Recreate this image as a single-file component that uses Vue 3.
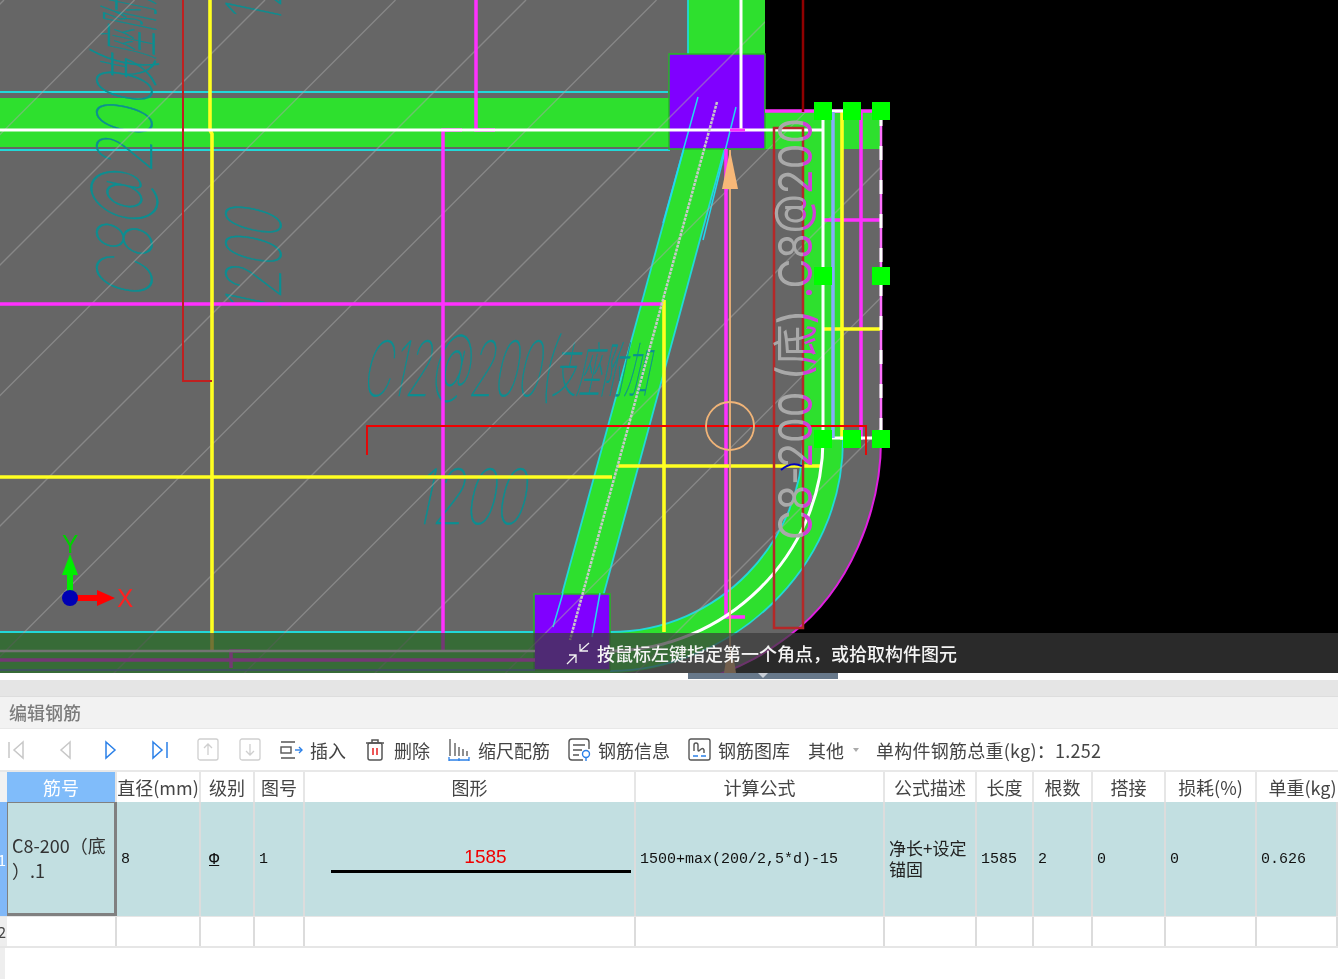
<script setup>
const diagonals = Array.from({ length: 12 }, (_, i) => 4 + i * 130.5);
const handles = [
  [814, 102], [843, 102], [872, 102],
  [814, 267], [872, 267],
  [814, 430], [843, 430], [872, 430],
];

const columns = [
  { label: "筋号", value: "", active: true },
  { label: "直径(mm)", value: "8" },
  { label: "级别", value: "Φ", grade: true },
  { label: "图号", value: "1" },
  { label: "图形", shape: true },
  { label: "计算公式", value: "1500+max(200/2,5*d)-15" },
  { label: "公式描述", desc: true },
  { label: "长度", value: "1585" },
  { label: "根数", value: "2" },
  { label: "搭接", value: "0" },
  { label: "损耗(%)", value: "0" },
  { label: "单重(kg)", value: "0.626", last: true },
];
</script>

<template>
  <div class="app">
    <div class="canvas">
      <svg class="cad" width="1338" height="673" viewBox="0 0 1338 673">
        <defs>
          <clipPath id="floor">
            <path d="M0 0H765V112H881V440C881 510 850 590 790 635C770 650 745 668 700 680H0Z" />
          </clipPath>
          <linearGradient id="dim" gradientUnits="userSpaceOnUse" x1="0" y1="-30" x2="0" y2="10">
            <stop offset="0.52" stop-color="#a9a9a9" />
            <stop offset="0.52" stop-color="#d040d8" />
          </linearGradient>
        </defs>

        <rect width="1338" height="673" fill="#000" />
        <path d="M0 0H765V112H881V440C881 510 850 590 790 635C770 650 745 668 700 680H0Z" fill="#666" />
        <path d="M881 440C881 510 850 590 790 635C770 650 745 668 700 680" fill="none" stroke="#e020e0" stroke-width="2" />

        <!-- beams -->
        <g fill="#2ee02e">
          <rect x="0" y="98" width="670" height="49" />
          <rect x="688" y="0" width="77" height="55" />
          <rect x="765" y="112" width="116" height="37" />
          <rect x="803" y="112" width="40" height="328" />
          <path d="M803 440C803 540 720 632 610 632H0V673H610C730 671 843 570 843 440Z" />
          <path d="M698 97L736 107L592 637L553 627Z" />
        </g>
        <g fill="none" stroke="#22d8d8" stroke-width="1.8">
          <path d="M0 92H668M0 150H670M688 0V54" />
          <path d="M803 440C803 540 720 632 610 632H0" />
          <path d="M843 440C843 570 730 671 610 671" />
          <path d="M698 97L553 627M736 107L592 637" />
          <path d="M803 150V440" />
        </g>

        <!-- slanted labels -->
        <g class="label">
          <text transform="translate(152 300) rotate(-90) skewX(-12) scale(.72 1)" font-size="76">C8@200(</text>
          <text transform="translate(152 86) rotate(-90) skewX(-12) scale(.44 1)" font-size="62">支座附加</text>
          <text transform="translate(281 318) rotate(-90) skewX(-12) scale(.65 1)" font-size="76">1200</text>
          <text transform="translate(281 27) rotate(-90) skewX(-12) scale(.65 1)" font-size="76">1200</text>
          <text transform="translate(361 396) skewX(-12) scale(.52 1)" font-size="76">C12@200(</text>
          <text transform="translate(552 392) skewX(-12) scale(.4 1)" font-size="60">支座附加</text>
          <text transform="translate(412 524) skewX(-12) scale(.68 1)" font-size="76">1200</text>
        </g>

        <!-- columns -->
        <g fill="#8000ff" stroke="#25b825" stroke-width="1.5">
          <rect x="669" y="54" width="96" height="95" />
          <rect x="534" y="594" width="76" height="76" />
        </g>
        <g fill="none" stroke="#22d8f0" stroke-width="1.5">
          <path d="M698 97L663 223M736 107L703 240M563 593L553 627M600 593L592 637" />
        </g>

        <!-- grid lines -->
        <g clip-path="url(#floor)" stroke="#a8a8a8" stroke-opacity=".5" stroke-width="1.4">
          <line v-for="c in diagonals" :key="c" :x1="c" y1="0" :x2="c - 700" y2="700" />
        </g>

        <g fill="none" stroke="#ff30ff" stroke-width="3.5">
          <path d="M0 304H664M443 652V130H462M476 0V130H495" />
          <path d="M726 149V617H745" />
          <path d="M765 111H881M861 112V440M823 220H881" />
          <path d="M0 660H535M231 668V651H250" />
          <path d="M881 112V440" stroke="#ff70ff" stroke-width="2.5" />
        </g>
        <g fill="none" stroke="#ffff20" stroke-width="3.6">
          <path d="M210 0V130L212 134V650" />
          <path d="M0 477H612M618 466H820M664 300V632" />
          <path d="M842 112V440M823 329H880" />
        </g>
        <g fill="none" stroke="#fff" stroke-width="3">
          <path d="M0 130H822M741 0V130" />
          <path d="M823 112V440C823 555 725 651 610 651" />
          <path d="M823 111H845" />
          <path d="M0 651H535" stroke-width="2.5" />
          <path d="M881 112V440" stroke-dasharray="14 20" />
          <path d="M832 438H881" stroke-dasharray="22 6" />
        </g>
        <path d="M730 130H745" stroke="#ff30ff" stroke-width="3" />
        <path d="M833 112V438" stroke="#86acf8" stroke-width="3.5" fill="none" />
        <path d="M717 102L570 640" stroke="#c8c8c8" stroke-width="2.5" stroke-dasharray="3 1" fill="none" />
        <path d="M0 670H535" stroke="#5070e0" stroke-width="1.5" />

        <!-- dimension lines -->
        <g fill="none" stroke="#b42828" stroke-width="2.5">
          <path d="M183 0V381H212" stroke="#c02020" stroke-width="2" />
          <path d="M803 0V112" stroke="#900000" stroke-width="2.5" />
          <path d="M774 128H803V628H774Z" />
        </g>
        <path d="M367 455V426H866V455" fill="none" stroke="#f00000" stroke-width="1.8" />

        <!-- rotated rebar label -->
        <text
          class="dim-text"
          transform="translate(812 540) rotate(-90)"
          font-size="46"
          textLength="422"
          lengthAdjust="spacingAndGlyphs"
          fill="url(#dim)"
        >C8-200 (底) .C8@200</text>
        <path d="M781 470Q791 461 802 466" fill="none" stroke="#0000c0" stroke-width="2" />

        <!-- direction arrow and circle -->
        <g fill="none" stroke="#f0b478" stroke-width="1.8">
          <path d="M730 150V673" />
          <circle cx="730" cy="426" r="24" />
        </g>
        <path d="M730 150L738 189H722Z" fill="#f8b878" />
        <path d="M724 673L726 660H734L736 673Z" fill="#f8b878" />

        <rect v-for="h in handles" :key="h.join()" :x="h[0]" :y="h[1]" width="18" height="18" fill="#00ff00" />

        <!-- axes -->
        <path d="M70 598V575" stroke="#00ee00" stroke-width="6" />
        <path d="M70 554L78 575H62Z" fill="#00ee00" />
        <path d="M70 598H98" stroke="#ff0000" stroke-width="6" />
        <path d="M115 598L97 590V606Z" fill="#ff0000" />
        <circle cx="70" cy="598" r="8" fill="#0000b4" />
        <text class="axis" x="62" y="553" fill="#00d000">Y</text>
        <text class="axis" x="117" y="607" fill="#ff2020">X</text>
      </svg>

      <div class="hint">
        <svg class="hint-icon" width="24" height="24" viewBox="0 0 24 24" fill="none" stroke="#f2f2f2" stroke-width="1.3">
          <path d="M23 2L14 10M14 3V10H22M1 23L10 14M3 14H10V22" />
        </svg>
        <span>按鼠标左键指定第一个角点，或拾取构件图元</span>
      </div>
      <div class="grip"><i></i></div>
    </div>

    <div class="gap"></div>
    <div class="strip"></div>
    <div class="title">编辑钢筋</div>

    <div class="toolbar">
      <svg class="nav first" width="16" height="20" viewBox="0 0 16 20" fill="none" stroke="#c8c8c8" stroke-width="1.5">
        <path d="M1 2V18M15 2L6 10L15 18Z" />
      </svg>
      <svg class="nav second" width="14" height="20" viewBox="0 0 14 20" fill="none" stroke="#c8c8c8" stroke-width="1.5">
        <path d="M12 2L3 10L12 18Z" />
      </svg>
      <svg class="nav third" width="14" height="20" viewBox="0 0 14 20" fill="none" stroke="#2b80e8" stroke-width="1.5">
        <path d="M2 2L11 10L2 18Z" />
      </svg>
      <svg class="nav fourth" width="16" height="20" viewBox="0 0 16 20" fill="none" stroke="#2b80e8" stroke-width="1.5">
        <path d="M1 2L10 10L1 18ZM15 2V18" />
      </svg>
      <svg class="nav up" width="22" height="23" viewBox="0 0 22 23" fill="none" stroke="#cfcfcf" stroke-width="1.3">
        <rect x="1" y="1" width="20" height="21" rx="2" />
        <path d="M11 17V6M7 10L11 6L15 10" />
      </svg>
      <svg class="nav down" width="22" height="23" viewBox="0 0 22 23" fill="none" stroke="#cfcfcf" stroke-width="1.3">
        <rect x="1" y="1" width="20" height="21" rx="2" />
        <path d="M11 6V17M7 13L11 17L15 13" />
      </svg>

      <div class="tool insert">
        <svg width="23" height="20" viewBox="0 0 23 20" fill="none" stroke="#555" stroke-width="1.4">
          <path d="M1 2H15M1 18H15" />
          <rect x="1" y="7" width="10" height="6" />
          <path d="M15 10H22" stroke="#2b80e8" />
          <path d="M19 7L22 10L19 13" stroke="#2b80e8" />
        </svg>
        <span>插入</span>
      </div>
      <div class="tool remove">
        <svg width="20" height="24" viewBox="0 0 20 24" fill="none" stroke="#555" stroke-width="1.5">
          <path d="M1 5H19M7 5V2H13V5" />
          <rect x="3" y="5" width="14" height="17" rx="2" />
          <path d="M8 10V17M12 10V17" stroke="#e82020" />
        </svg>
        <span>删除</span>
      </div>
      <div class="tool scale">
        <svg width="22" height="24" viewBox="0 0 22 24" fill="none" stroke="#555" stroke-width="1.3">
          <path d="M2 1V18M7 5V18M11 9V18M15 11V18M19 13V18" />
          <path d="M1 22H21M1 19V23M21 19V23M11 20V23" stroke="#2b80e8" />
        </svg>
        <span>缩尺配筋</span>
      </div>
      <div class="tool info">
        <svg width="25" height="24" viewBox="0 0 25 24" fill="none" stroke="#555" stroke-width="1.4">
          <path d="M15 22H4Q1 22 1 19V4Q1 1 4 1H18Q21 1 21 4V11" />
          <path d="M5 7H17M5 12H14M5 17H11" />
          <circle cx="18" cy="16" r="3.5" stroke="#2b80e8" />
          <path d="M18 20V23" stroke="#2b80e8" />
        </svg>
        <span>钢筋信息</span>
      </div>
      <div class="tool library">
        <svg width="23" height="23" viewBox="0 0 23 23" fill="none" stroke="#555" stroke-width="1.4">
          <rect x="1" y="1" width="21" height="21" rx="2" />
          <path d="M6 13V7Q6 5 8 5Q10 5 10 7V12Q10 14 12 12Q15 9 16 12V15" />
          <path d="M5 18H10M13 18H18" stroke="#2b80e8" />
        </svg>
        <span>钢筋图库</span>
      </div>
      <div class="tool other">
        <span>其他</span>
        <i class="caret"></i>
      </div>
      <span class="weight">单构件钢筋总重(kg)：1.252</span>
    </div>

    <div class="grid head">
      <div class="corner"></div>
      <div v-for="col in columns" :key="col.label" class="th" :class="{ active: col.active, last: col.last }">{{ col.label }}</div>
    </div>

    <div class="grid row-one">
      <div class="num current">1</div>
      <div v-for="col in columns" :key="col.label" class="td" :class="{ selected: col.active, desc: col.desc }">
        <template v-if="col.active">C8-200（底<br />）.1</template>
        <div v-else-if="col.shape" class="shape">
          <span>1585</span>
          <i></i>
        </div>
        <template v-else-if="col.desc">净长+设定<br />锚固</template>
        <span v-else-if="col.grade" class="grade">{{ col.value }}</span>
        <span v-else class="mono">{{ col.value }}</span>
      </div>
    </div>

    <div class="grid row-two">
      <div class="num">2</div>
      <div v-for="col in columns" :key="col.label" class="td"></div>
    </div>

    <div class="rest"></div>
  </div>
</template>

<style scoped>
.app {
  width: 1338px;
  height: 979px;
  overflow: hidden;
  display: flex;
  flex-direction: column;
  background: #fff;
  font-family: "Noto Sans CJK SC", "Noto Sans", sans-serif;
  font-size: 18px;
  color: #444;
  filter: blur(0.5px);
}

.canvas {
  position: relative;
  height: 673px;
  flex: none;
}

.cad {
  display: block;
}

.label text {
  fill: #0b8f92;
  stroke: #0b8f92;
  stroke-width: 0.5;
  font-family: Inter, "Noto Sans CJK SC", sans-serif;
  font-weight: 100;
}

.dim-text {
  font-family: Inter, "Noto Sans CJK SC", sans-serif;
  font-weight: 400;
}

.axis {
  font-family: Inter, sans-serif;
  font-weight: 400;
  font-size: 24px;
}

.hint {
  position: absolute;
  left: 0;
  right: 0;
  bottom: 0;
  height: 40px;
  background: rgba(59, 59, 59, 0.71);
  display: flex;
  align-items: center;
  padding-left: 566px;
  gap: 7px;
  color: #f4f4f4;
  font-weight: 500;
}

.hint-icon {
  flex: none;
}

.grip {
  position: absolute;
  left: 688px;
  top: 673px;
  width: 150px;
  height: 6px;
  background: #67788a;
  display: flex;
  justify-content: center;
}

.grip i {
  width: 0;
  height: 0;
  border-left: 5px solid transparent;
  border-right: 5px solid transparent;
  border-top: 5px solid #c8ced6;
}

.gap {
  height: 7px;
  flex: none;
}

.strip {
  height: 16px;
  flex: none;
  background: #e5e5e5;
}

.title {
  height: 33px;
  flex: none;
  box-sizing: border-box;
  border-top: 1px solid #ddd;
  border-bottom: 1px solid #e8e8e8;
  background: #f2f2f2;
  padding-left: 9px;
  line-height: 31px;
  color: #7c7c7c;
  font-weight: 500;
}

.toolbar {
  height: 41px;
  flex: none;
  display: flex;
  align-items: center;
}

.nav {
  flex: none;
}

.first {
  margin-left: 8px;
}

.second {
  margin-left: 34px;
}

.third {
  margin-left: 32px;
}

.fourth {
  margin-left: 34px;
}

.up {
  margin-left: 29px;
}

.down {
  margin-left: 20px;
}

.tool {
  display: flex;
  align-items: center;
  flex: none;
}

.insert {
  margin-left: 19px;
  gap: 7px;
}

.remove {
  margin-left: 19px;
  gap: 9px;
}

.scale {
  margin-left: 18px;
  gap: 8px;
}

.info {
  margin-left: 18px;
  gap: 5px;
}

.library {
  margin-left: 18px;
  gap: 7px;
}

.other {
  margin-left: 18px;
  gap: 9px;
}

.caret {
  width: 0;
  height: 0;
  border-left: 3.5px solid transparent;
  border-right: 3.5px solid transparent;
  border-top: 4px solid #aaa;
}

.weight {
  margin-left: 17px;
  white-space: nowrap;
  letter-spacing: 0.25px;
}

.grid {
  display: grid;
  grid-template-columns: 7px 110px 84px 54px 50px 331px 249px 92px 57px 59px 73px 91px 81px;
  flex: none;
}

.head {
  height: 32px;
  border-top: 2px solid #e8e8e8;
  box-sizing: border-box;
}

.corner {
  background: #f2f2f2;
}

.th {
  box-sizing: border-box;
  border-right: 2px solid #e6e6e6;
  display: flex;
  align-items: center;
  justify-content: center;
  white-space: nowrap;
  overflow: hidden;
  line-height: 30px;
}

.th.active {
  background: #80bcfa;
  color: #fff;
}

.th.last {
  border-right: 0;
  padding-left: 10px;
}

.row-one {
  height: 114px;
  background: #c2dfe1;
}

.row-two {
  height: 32px;
  border-top: 1px solid #e6e6e6;
  border-bottom: 2px solid #e6e6e6;
  box-sizing: border-box;
}

.num {
  background: #eee;
  display: flex;
  align-items: center;
  justify-content: flex-end;
  overflow: hidden;
  font-size: 15px;
  padding-right: 1px;
  line-height: 1;
}

.num.current {
  background: #80b8f8;
  color: #fff;
}

.td {
  box-sizing: border-box;
  border-right: 2px solid #dcdcdc;
  display: flex;
  align-items: center;
  padding-left: 4px;
  line-height: 25px;
  color: #222;
  min-width: 0;
}

.td.selected {
  border: 3px solid #808080;
  border-width: 1px 3px 3px 1px;
  font-size: 18px;
  color: #333;
}

.td.desc {
  font-size: 17px;
  line-height: 21px;
  padding-bottom: 2px;
}

.mono {
  font-family: "Liberation Mono", monospace;
  font-size: 15px;
  white-space: nowrap;
  color: #111;
}

.grade {
  font-family: "Liberation Mono", monospace;
  font-size: 17px;
  margin-left: 4px;
  color: #111;
  text-decoration: underline;
}

.shape {
  flex: 1;
  display: flex;
  flex-direction: column;
  align-items: center;
  padding: 0 0 0 22px;
}

.shape span {
  font-family: "Liberation Sans", sans-serif;
  font-size: 19px;
  line-height: 24px;
  color: #f00000;
  margin-left: 6px;
}

.shape i {
  align-self: stretch;
  height: 3px;
  margin-top: 1px;
  margin-right: 3px;
  background: #000;
}

.rest {
  flex: 1;
  border-left: 5px solid #eee;
}
</style>

<style>
body {
  margin: 0;
  background: #fff;
}
</style>
